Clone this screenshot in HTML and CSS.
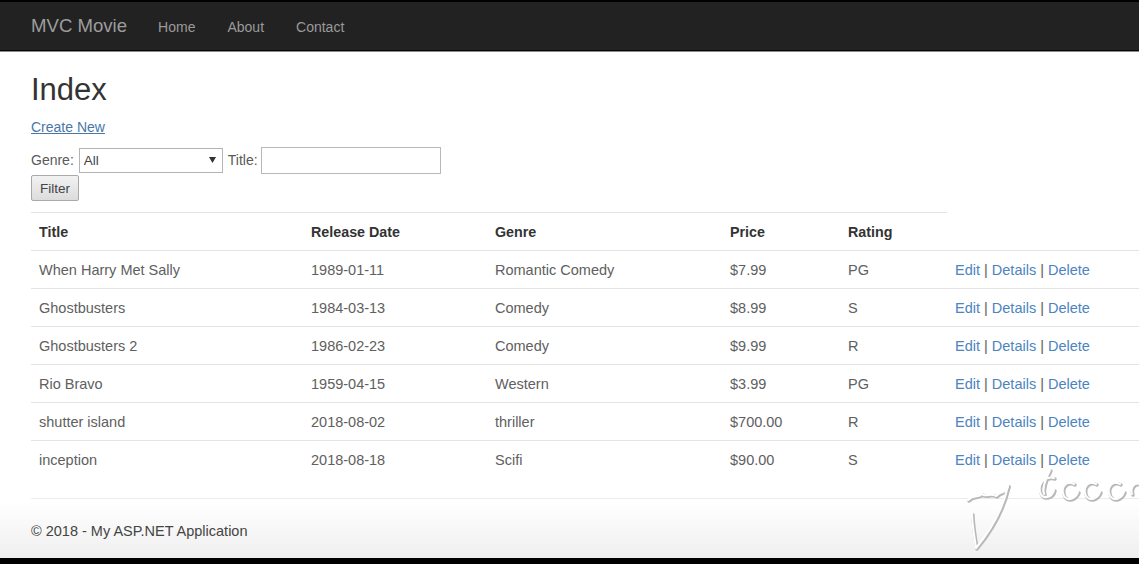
FILE: index.html
```html
<!DOCTYPE html>
<html>
<head>
<meta charset="utf-8">
<title>Index - MVC Movie</title>
<link rel="stylesheet" href="styles.css">
</head>
<body>
<div class="screen">
  <nav class="navbar">
    <a class="brand" href="#">MVC Movie</a>
    <ul class="nav">
      <li><a href="#">Home</a></li>
      <li><a href="#">About</a></li>
      <li><a href="#">Contact</a></li>
    </ul>
  </nav>
  <main class="container">
    <h2 class="title">Index</h2>
    <p class="create"><a href="#">Create New</a></p>
    <form class="filter">
      <div class="filter-row">
        <label class="lbl-genre">Genre:</label>
        <select class="select"><option>All</option></select>
        <label class="lbl-title">Title:</label>
        <input class="text" type="text">
      </div>
      <button class="btn" type="button">Filter</button>
    </form>
    <table class="table">
      <thead>
        <tr>
          <th class="c1">Title</th>
          <th class="c2">Release Date</th>
          <th class="c3">Genre</th>
          <th class="c4">Price</th>
          <th class="c5">Rating</th>
          <th class="c6 blank"></th>
        </tr>
      </thead>
      <tbody>
        <tr><td>When Harry Met Sally</td><td>1989-01-11</td><td>Romantic Comedy</td><td>$7.99</td><td>PG</td><td class="acts"><a href="#">Edit</a> | <a href="#">Details</a> | <a href="#">Delete</a></td></tr>
        <tr><td>Ghostbusters</td><td>1984-03-13</td><td>Comedy</td><td>$8.99</td><td>S</td><td class="acts"><a href="#">Edit</a> | <a href="#">Details</a> | <a href="#">Delete</a></td></tr>
        <tr><td>Ghostbusters 2</td><td>1986-02-23</td><td>Comedy</td><td>$9.99</td><td>R</td><td class="acts"><a href="#">Edit</a> | <a href="#">Details</a> | <a href="#">Delete</a></td></tr>
        <tr><td>Rio Bravo</td><td>1959-04-15</td><td>Western</td><td>$3.99</td><td>PG</td><td class="acts"><a href="#">Edit</a> | <a href="#">Details</a> | <a href="#">Delete</a></td></tr>
        <tr><td>shutter island</td><td>2018-08-02</td><td>thriller</td><td>$700.00</td><td>R</td><td class="acts"><a href="#">Edit</a> | <a href="#">Details</a> | <a href="#">Delete</a></td></tr>
        <tr><td>inception</td><td>2018-08-18</td><td>Scifi</td><td>$90.00</td><td>S</td><td class="acts"><a href="#">Edit</a> | <a href="#">Details</a> | <a href="#">Delete</a></td></tr>
      </tbody>
    </table>
    <hr class="rule">
    <footer class="footer">
      <p>&copy; 2018 - My ASP.NET Application</p>
    </footer>
  </main>
  <svg class="watermark" width="180" height="90" viewBox="0 0 180 90" fill="none" stroke-linecap="round" stroke-linejoin="round">
    <g stroke="#b9b9b9" stroke-width="3.5" transform="translate(1 1)">
      <path d="M6 36 C12 30 16 34 20 30 C24 34 28 28 34 32 C40 26 44 30 46 22"/>
      <path d="M46 22 C42 40 34 60 14 84 C12 70 10 60 10 50"/>
      <path d="M92 14 C84 12 76 18 78 28 C80 36 90 34 92 26"/>
      <path d="M88 6 C84 14 80 24 82 30"/>
      <path d="M112 20 C104 16 98 24 102 32 C106 38 114 34 116 28"/>
      <path d="M134 20 C126 16 120 24 124 32 C128 38 136 34 138 28"/>
      <path d="M158 20 C150 16 144 24 148 32 C152 38 160 34 162 28"/>
      <path d="M178 20 C172 18 168 24 170 30"/>
    </g>
    <g stroke="#ffffff" stroke-width="2">
      <path d="M6 36 C12 30 16 34 20 30 C24 34 28 28 34 32 C40 26 44 30 46 22"/>
      <path d="M46 22 C42 40 34 60 14 84 C12 70 10 60 10 50"/>
      <path d="M92 14 C84 12 76 18 78 28 C80 36 90 34 92 26"/>
      <path d="M88 6 C84 14 80 24 82 30"/>
      <path d="M112 20 C104 16 98 24 102 32 C106 38 114 34 116 28"/>
      <path d="M134 20 C126 16 120 24 124 32 C128 38 136 34 138 28"/>
      <path d="M158 20 C150 16 144 24 148 32 C152 38 160 34 162 28"/>
      <path d="M178 20 C172 18 168 24 170 30"/>
    </g>
  </svg>
</div>
</body>
</html>
```
FILE: styles.css
```css
* { box-sizing: border-box; }

html, body {
  margin: 0;
  padding: 0;
  background: #000;
}

body {
  font-family: "Liberation Sans", Arial, Helvetica, sans-serif;
  font-size: 14.5px;
  line-height: 20px;
  color: #333;
  overflow: hidden;
  width: 1139px;
  height: 564px;
}

.screen {
  position: relative;
  margin-top: 2px;
  height: 556px;
  overflow: hidden;
  background: linear-gradient(to bottom, #fff 0, #fff 500px, #efefef 556px);
}

a { color: #3d78b3; text-decoration: none; }

.navbar {
  display: flex;
  align-items: center;
  height: 49px;
  background: #222;
  border-bottom: 1px solid #080808;
  box-shadow: 0 1px 0 #8a8a8a;
  padding-left: 31px;
}

.brand {
  font-size: 18.6px;
  color: #9d9d9d;
  line-height: 20px;
  margin-top: -1px;
}

.nav {
  display: flex;
  list-style: none;
  margin: 0 0 0 31px;
  padding: 0;
}

.nav li a {
  display: block;
  color: #9a9a9a;
  font-size: 14px;
  padding: 0 16px;
  line-height: 20px;
  margin-top: 1px;
}

.nav li:first-child a { padding-left: 0; }

.container {
  padding-left: 31px;
}

.title {
  font-size: 31px;
  font-weight: 500;
  line-height: 33px;
  margin: 22px 0 10px;
  color: #333;
}

.create {
  margin: 0 0 10px;
  font-size: 14px;
  line-height: 22px;
}

.create a {
  text-decoration: underline;
  color: #4a76a8;
}

.filter {
  margin: 0 0 11px;
  font-size: 14px;
  color: #5a5a5a;
}

.filter-row {
  display: flex;
  align-items: center;
  height: 28px;
  margin-top: -2px;
}

.lbl-genre { margin-right: 5px; }
.lbl-title { margin-right: 3px; }

.select {
  appearance: none;
  -webkit-appearance: none;
  width: 144px;
  height: 25px;
  border: 1px solid #b4b4b4;
  background: #fff url("data:image/svg+xml;utf8,<svg xmlns='http://www.w3.org/2000/svg' width='7' height='6'><path d='M0 0 L7 0 L3.5 6 Z' fill='%23333'/></svg>") no-repeat right 6px center;
  font-family: "Liberation Sans", Arial, sans-serif;
  font-size: 13.5px;
  color: #444;
  padding: 0 4px;
  margin-right: 5px;
  border-radius: 0;
}

.text {
  width: 180px;
  height: 27px;
  border: 1px solid #b8b8b8;
  padding: 0 4px;
  font-size: 13px;
}

.btn {
  display: block;
  width: 48px;
  height: 26px;
  margin-top: 1px;
  font-family: "Liberation Sans", Arial, sans-serif;
  font-size: 13.5px;
  color: #444;
  background: linear-gradient(to bottom, #f2f2f2, #dcdcdc);
  border: 1px solid #a9a9a9;
  border-radius: 2px;
  padding: 0;
}

.table {
  width: 100%;
  border-collapse: collapse;
  margin-bottom: 20px;
}

.table th, .table td {
  text-align: left;
  padding: 9px 8px 7px;
  line-height: 21px;
  border-top: 1px solid #e4e4e4;
  white-space: nowrap;
}

.table th {
  font-weight: bold;
  color: #333;
  font-size: 14.3px;
}

.table th.blank { border-top-color: transparent; }

.table td { color: #606060; }

.c1 { width: 272px; }
.c2 { width: 184px; }
.c3 { width: 235px; }
.c4 { width: 118px; }
.c5 { width: 107px; }

.acts { color: #555; }
.acts a { color: #4c84c0; }

.rule {
  margin: 0;
  border: 0;
  border-top: 1px solid #ececec;
}

.footer p {
  margin: 22px 0 0;
  color: #444;
}

.watermark {
  position: absolute;
  left: 962px;
  top: 462px;
}
```
